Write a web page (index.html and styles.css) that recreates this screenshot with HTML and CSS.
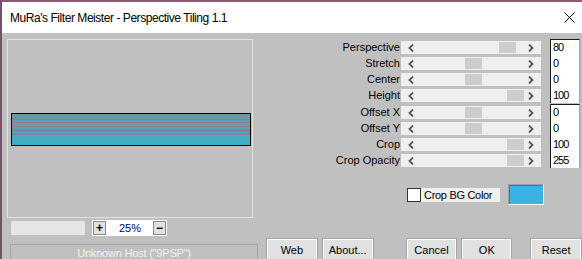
FILE: index.html
```html
<!DOCTYPE html>
<html>
<head>
<meta charset="utf-8">
<link rel="stylesheet" href="styles.css">
</head>
<body>
<div class="window">
  <div class="titlebar">
    <span class="title">MuRa's Filter Meister - Perspective Tiling 1.1</span>
    <svg class="close" width="11" height="11" viewBox="0 0 11 11"><path d="M0.5 0.5 L10.5 10.5 M10.5 0.5 L0.5 10.5" stroke="#000" stroke-width="1" fill="none"/></svg>
  </div>
  <div class="client">
    <div class="left">
      <div class="frame">
        <div class="preview"></div>
      </div>
      <div class="zoomrow">
        <div class="progress"></div>
        <div class="zoomgroup">
          <span class="zbtn">+</span>
          <span class="zval">25%</span>
          <span class="zbtn">−</span>
        </div>
      </div>
      <div class="host">Unknown Host ("9PSP")</div>
    </div>
    <div class="right">
      <div class="sliders">
        <div class="group">
          <div class="row"><span class="label">Perspective</span><div class="track"><svg class="arr" width="6" height="8" viewBox="0 0 6 8"><path d="M5 0.5 L1.5 4 L5 7.5" stroke="#555" stroke-width="1.8" fill="none"/></svg><span class="thumb" style="left:98px"></span><svg class="arr" width="6" height="8" viewBox="0 0 6 8"><path d="M1 0.5 L4.5 4 L1 7.5" stroke="#555" stroke-width="1.8" fill="none"/></svg></div><span class="val first">80</span></div>
          <div class="row"><span class="label">Stretch</span><div class="track"><svg class="arr" width="6" height="8" viewBox="0 0 6 8"><path d="M5 0.5 L1.5 4 L5 7.5" stroke="#555" stroke-width="1.8" fill="none"/></svg><span class="thumb" style="left:64px"></span><svg class="arr" width="6" height="8" viewBox="0 0 6 8"><path d="M1 0.5 L4.5 4 L1 7.5" stroke="#555" stroke-width="1.8" fill="none"/></svg></div><span class="val">0</span></div>
          <div class="row"><span class="label">Center</span><div class="track"><svg class="arr" width="6" height="8" viewBox="0 0 6 8"><path d="M5 0.5 L1.5 4 L5 7.5" stroke="#555" stroke-width="1.8" fill="none"/></svg><span class="thumb" style="left:64px"></span><svg class="arr" width="6" height="8" viewBox="0 0 6 8"><path d="M1 0.5 L4.5 4 L1 7.5" stroke="#555" stroke-width="1.8" fill="none"/></svg></div><span class="val">0</span></div>
          <div class="row"><span class="label">Height</span><div class="track"><svg class="arr" width="6" height="8" viewBox="0 0 6 8"><path d="M5 0.5 L1.5 4 L5 7.5" stroke="#555" stroke-width="1.8" fill="none"/></svg><span class="thumb" style="left:106px"></span><svg class="arr" width="6" height="8" viewBox="0 0 6 8"><path d="M1 0.5 L4.5 4 L1 7.5" stroke="#555" stroke-width="1.8" fill="none"/></svg></div><span class="val">100</span></div>
        </div>
        <div class="group">
          <div class="row"><span class="label">Offset X</span><div class="track"><svg class="arr" width="6" height="8" viewBox="0 0 6 8"><path d="M5 0.5 L1.5 4 L5 7.5" stroke="#555" stroke-width="1.8" fill="none"/></svg><span class="thumb" style="left:64px"></span><svg class="arr" width="6" height="8" viewBox="0 0 6 8"><path d="M1 0.5 L4.5 4 L1 7.5" stroke="#555" stroke-width="1.8" fill="none"/></svg></div><span class="val first">0</span></div>
          <div class="row"><span class="label">Offset Y</span><div class="track"><svg class="arr" width="6" height="8" viewBox="0 0 6 8"><path d="M5 0.5 L1.5 4 L5 7.5" stroke="#555" stroke-width="1.8" fill="none"/></svg><span class="thumb" style="left:64px"></span><svg class="arr" width="6" height="8" viewBox="0 0 6 8"><path d="M1 0.5 L4.5 4 L1 7.5" stroke="#555" stroke-width="1.8" fill="none"/></svg></div><span class="val">0</span></div>
          <div class="row"><span class="label">Crop</span><div class="track"><svg class="arr" width="6" height="8" viewBox="0 0 6 8"><path d="M5 0.5 L1.5 4 L5 7.5" stroke="#555" stroke-width="1.8" fill="none"/></svg><span class="thumb" style="left:106px"></span><svg class="arr" width="6" height="8" viewBox="0 0 6 8"><path d="M1 0.5 L4.5 4 L1 7.5" stroke="#555" stroke-width="1.8" fill="none"/></svg></div><span class="val">100</span></div>
          <div class="row"><span class="label">Crop Opacity</span><div class="track"><svg class="arr" width="6" height="8" viewBox="0 0 6 8"><path d="M5 0.5 L1.5 4 L5 7.5" stroke="#555" stroke-width="1.8" fill="none"/></svg><span class="thumb" style="left:106px"></span><svg class="arr" width="6" height="8" viewBox="0 0 6 8"><path d="M1 0.5 L4.5 4 L1 7.5" stroke="#555" stroke-width="1.8" fill="none"/></svg></div><span class="val">255</span></div>
        </div>
      </div>
      <div class="cbrow">
        <span class="cb"></span>
        <span class="cblabel">Crop BG Color</span>
        <span class="swatch"></span>
      </div>
      <div class="buttons">
        <span class="btn">Web</span>
        <span class="btn gap4">About...</span>
        <span class="btn gap32">Cancel</span>
        <span class="btn gap4 ok">OK</span>
        <span class="btn gap18">Reset</span>
      </div>
    </div>
  </div>
</div>
</body>
</html>
```
FILE: styles.css
```css
html, body {
  margin: 0;
  padding: 0;
}
body {
  width: 582px;
  height: 259px;
  overflow: hidden;
  background: #c0c0c0;
  font-family: "Liberation Sans", Arial, sans-serif;
  font-size: 11px;
  color: #000;
}
.window {
  border-top: 2px solid #8a5a72;
  border-left: 2px solid #74506a;
  height: 257px;
}
.titlebar {
  height: 31px;
  background: #fff;
  display: flex;
  align-items: center;
  padding-left: 8px;
}
.title {
  font-size: 12px;
  letter-spacing: -0.45px;
  padding-top: 1px;
}
.close {
  margin-left: auto;
  margin-right: 7px;
}
.client {
  display: flex;
  height: 224px;
}
.left {
  width: 250px;
  padding-left: 5px;
  padding-top: 6px;
}
.frame {
  width: 246px;
  height: 179px;
  box-sizing: border-box;
  border: 1px solid #e2e2e2;
  padding-top: 73px;
  padding-left: 3px;
}
.preview {
  width: 240px;
  height: 33px;
  box-sizing: border-box;
  border: 1px solid #000;
  background:
    linear-gradient(to bottom,
      #6c96aa 0px, #6c96aa 5px,
      #9a7a92 5px, #9a7a92 6px,
      #5e9eb2 6px, #5e9eb2 8px,
      #98788e 8px, #98788e 9px,
      #52a4b8 9px, #52a4b8 12px,
      #9c7a90 12px, #9c7a90 13px,
      #4aa8bc 13px, #4aa8bc 15px,
      #967a92 15px, #8e7c96 18px,
      #44acc0 18px, #44acc0 19px,
      #987890 19px, #8a7e98 21px,
      #46acc0 21px, #3ab2c6 31px);
}
.zoomrow {
  display: flex;
  align-items: center;
  margin-top: 2px;
  height: 16px;
  padding-left: 4px;
}
.progress {
  width: 74px;
  height: 14px;
  background: #e6e6e6;
}
.zoomgroup {
  margin-left: 7px;
  width: 75px;
  height: 16px;
  box-sizing: border-box;
  padding: 0 1px;
  background: #fff;
  display: flex;
  align-items: center;
  justify-content: space-between;
}
.zbtn {
  width: 13px;
  height: 14px;
  box-sizing: border-box;
  border: 1px solid #8a8a8a;
  background: #e1e1e1;
  display: flex;
  align-items: center;
  justify-content: center;
  font-size: 12px;
  font-weight: bold;
  line-height: 1;
}
.zval {
  color: #000080;
  font-size: 11px;
  padding-left: 1px;
}
.host {
  margin-top: 8px;
  margin-left: 3px;
  width: 248px;
  height: 22px;
  box-sizing: border-box;
  border: 1px solid #a6a6a6;
  color: #f2f2f2;
  text-align: center;
  letter-spacing: -0.2px;
  padding-top: 2px;
}
.right {
  width: 325px;
  padding-top: 6px;
}
.sliders {
  display: flex;
  flex-direction: column;
  gap: 1px;
}
.row {
  display: grid;
  grid-template-columns: 144px 149px 30px;
  height: 16px;
}
.label {
  text-align: right;
  padding-right: 1px;
  padding-top: 2px;
  line-height: 13px;
  white-space: nowrap;
}
.track {
  grid-column: 2;
  position: relative;
  margin-top: 2px;
  height: 13px;
  width: 140px;
  background: #efefef;
  display: flex;
  align-items: center;
  justify-content: space-between;
  padding: 0 7px;
  box-sizing: border-box;
}
.arr {
  display: block;
}
.thumb {
  position: absolute;
  top: 1px;
  width: 17px;
  height: 11px;
  background: #cdcdcd;
}
.val {
  grid-column: 3;
  background: #fff;
  border-left: 1px solid #1a1a1a;
  border-right: 1px solid #a0a0a0;
  padding-left: 2px;
  line-height: 16px;
  letter-spacing: -1px;
  font-size: 11px;
}
.val.first {
  border-top: 1px solid #1a1a1a;
  line-height: 14px;
}
.cbrow {
  display: flex;
  align-items: center;
  margin-top: 16px;
  height: 21px;
  padding-left: 150px;
}
.cb {
  width: 14px;
  height: 14px;
  box-sizing: border-box;
  border: 1px solid #333;
  background: #fff;
}
.cblabel {
  width: 79px;
  height: 14px;
  box-sizing: border-box;
  background: #f0f0f0;
  padding-left: 3px;
  line-height: 14px;
  letter-spacing: -0.3px;
}
.swatch {
  margin-left: 8px;
  width: 36px;
  height: 21px;
  box-sizing: border-box;
  border: 1px solid;
  border-color: #a0a0a0 #fff #fff #a0a0a0;
  box-shadow: inset 1px 1px 0 #6e6e6e;
  background: #3bb2e4;
}
.buttons {
  display: flex;
  margin-top: 33px;
  padding-left: 9px;
}
.btn {
  width: 52px;
  height: 24px;
  box-sizing: border-box;
  border: 1px solid #a4a4a4;
  box-shadow: inset 1px 1px 0 #fff, inset -1px -1px 0 #fff;
  background: #e1e1e1;
  display: flex;
  align-items: center;
  justify-content: center;
  padding-bottom: 1px;
}
.gap4 { margin-left: 4px; }
.gap32 { margin-left: 32px; }
.gap18 { margin-left: 18px; }
.ok { width: 51px; }
```
